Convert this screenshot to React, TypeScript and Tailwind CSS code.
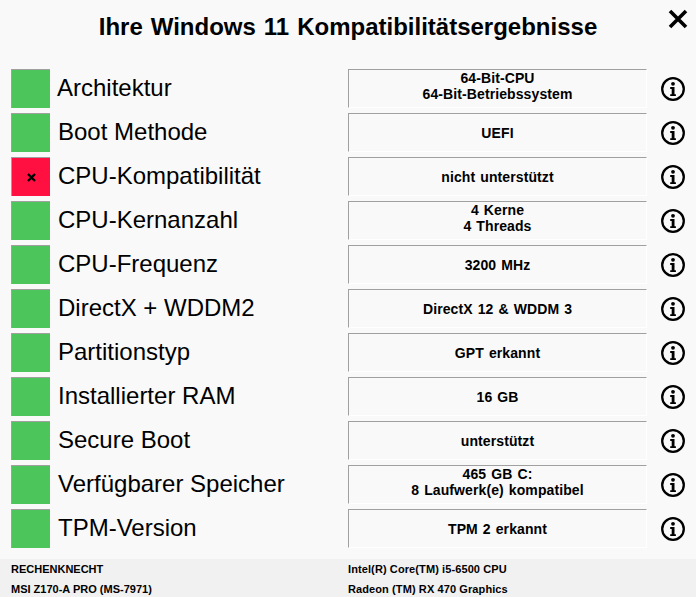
const rows: { label: string; lines: string[]; bad?: boolean; shift?: boolean }[] = [
  { label: "Architektur", lines: ["64-Bit-CPU", "64-Bit-Betriebssystem"], shift: true },
  { label: "Boot Methode", lines: ["UEFI"] },
  { label: "CPU-Kompatibilität", lines: ["nicht unterstützt"], bad: true },
  { label: "CPU-Kernanzahl", lines: ["4 Kerne", "4 Threads"] },
  { label: "CPU-Frequenz", lines: ["3200 MHz"] },
  { label: "DirectX + WDDM2", lines: ["DirectX 12 & WDDM 3"] },
  { label: "Partitionstyp", lines: ["GPT erkannt"] },
  { label: "Installierter RAM", lines: ["16 GB"] },
  { label: "Secure Boot", lines: ["unterstützt"] },
  { label: "Verfügbarer Speicher", lines: ["465 GB C:", "8 Laufwerk(e) kompatibel"] },
  { label: "TPM-Version", lines: ["TPM 2 erkannt"] },
];

function InfoIcon() {
  return (
    <svg width="24" height="24" viewBox="0 0 24 24" fill="none" className="block">
      <circle cx="12" cy="12" r="10.8" stroke="#000" strokeWidth="2.3" />
      <circle cx="12" cy="6.8" r="1.9" fill="#000" />
      <path d="M9.2 10h4.3v7.2h1.4v1.9H9.2v-1.9h1.5v-5.3H9.2z" fill="#000" />
    </svg>
  );
}

export default function App() {
  return (
    <div className="flex h-[597px] w-[696px] flex-col overflow-hidden bg-[#f9f9f9] font-['Liberation_Sans',Arial,sans-serif] text-black">
      <div className="relative flex h-[69px] shrink-0 justify-center">
        <h1 className="mt-[13px] h-7 text-[24px] leading-7 font-bold [word-spacing:1.3px]">
          Ihre Windows 11 Kompatibilitätsergebnisse
        </h1>
        <svg width="20" height="20" viewBox="0 0 20 20" className="absolute top-[9px] left-[668px]">
          <path d="M2 2 18 18M18 2 2 18" stroke="#000" strokeWidth="3.6" />
        </svg>
      </div>
      <div className="flex flex-col gap-[5px] pl-[11px]">
        {rows.map((r) => (
          <div key={r.label} className="flex h-[39px] items-center">
            <div
              className={`flex h-[39px] w-[39px] shrink-0 items-center justify-center border-t border-l border-[#a0a0a0] ${
                r.bad ? "bg-[#ff1040]" : "bg-[#4cc65a]"
              }`}
            >
              {r.bad && (
                <svg width="9" height="9" viewBox="0 0 9 9" className="block">
                  <path d="M1 1 8 8M8 1 1 8" stroke="#000" strokeWidth="2.4" />
                </svg>
              )}
            </div>
            <div
              className={`w-[298px] shrink-0 pb-[2px] text-[24px] leading-7 ${r.shift ? "pl-[7px]" : "pl-[8px]"}`}
            >
              {r.label}
            </div>
            <div
              className={`flex h-[39px] w-[299px] shrink-0 flex-col items-center justify-center border-t border-r border-b border-l border-t-[#a0a0a0] border-r-white border-b-white border-l-[#a0a0a0] text-[14px] leading-4 font-bold tracking-[0.1px] [word-spacing:1px] ${
                r.lines.length > 1 ? "pb-[5px]" : "pt-[1px]"
              }`}
            >
              {r.lines.map((l) => (
                <div key={l}>{l}</div>
              ))}
            </div>
            <div className="ml-[14px] shrink-0">
              <InfoIcon />
            </div>
          </div>
        ))}
      </div>
      <div className="mt-[11px] grid flex-1 grid-cols-[337px_1fr] grid-rows-[20px_20px] bg-[#f1f1f1] pl-[11px] text-[11px] leading-5 font-bold">
        <div>RECHENKNECHT</div>
        <div className="tracking-[0.1px]">Intel(R) Core(TM) i5-6500 CPU</div>
        <div>MSI Z170-A PRO (MS-7971)</div>
        <div className="tracking-[0.1px]">Radeon (TM) RX 470 Graphics</div>
      </div>
    </div>
  );
}
